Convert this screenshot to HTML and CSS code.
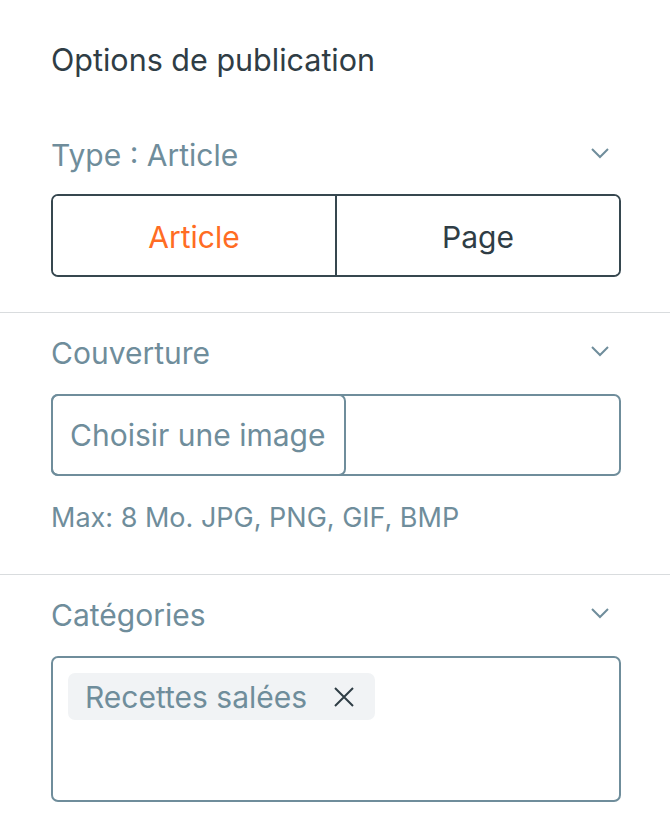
FILE: index.html
```html
<!DOCTYPE html>
<html lang="fr">
<head>
<meta charset="utf-8">
<link rel="stylesheet" href="styles.css">
</head>
<body>
<div class="panel">
  <h1 class="title">Options de publication</h1>

  <section class="section first">
    <div class="sec-head">
      <span class="sec-label">Type : Article</span>
      <svg class="chev" width="20" height="12" viewBox="0 0 20 12"><path d="M2 2 L10 10 L18 2" fill="none" stroke="#6f8d9b" stroke-width="2"/></svg>
    </div>
    <div class="seg">
      <button class="seg-btn active">Article</button>
      <button class="seg-btn">Page</button>
    </div>
  </section>

  <section class="section">
    <div class="sec-head">
      <span class="sec-label">Couverture</span>
      <svg class="chev" width="20" height="12" viewBox="0 0 20 12"><path d="M2 2 L10 10 L18 2" fill="none" stroke="#6f8d9b" stroke-width="2"/></svg>
    </div>
    <div class="file">
      <span class="file-btn">Choisir une image</span>
    </div>
    <p class="hint">Max: 8 Mo. JPG, PNG, GIF, BMP</p>
  </section>

  <section class="section last">
    <div class="sec-head">
      <span class="sec-label">Catégories</span>
      <svg class="chev" width="20" height="12" viewBox="0 0 20 12"><path d="M2 2 L10 10 L18 2" fill="none" stroke="#6f8d9b" stroke-width="2"/></svg>
    </div>
    <div class="tags">
      <span class="chip">Recettes salées
        <svg class="x" width="22" height="22" viewBox="0 0 22 22"><path d="M2 2 L20 20 M20 2 L2 20" stroke="#2f3d45" stroke-width="2"/></svg>
      </span>
    </div>
  </section>
</div>
</body>
</html>
```

FILE: styles.css
```css
* { box-sizing: border-box; }
body {
  margin: 0;
  background: #fff;
  font-family: Inter, "Noto Sans", sans-serif;
}
.panel { width: 670px; }
.title {
  margin: 0;
  padding: 39px 50px 0 51px;
  font-size: 30.5px;
  line-height: 42px;
  font-weight: 400;
  color: #2f3d45;
}
.section {
  padding: 19px 49px 35px 51px;
  border-bottom: 1px solid #d9dcde;
}
.section.first { padding-top: 53px; }
.section.first .sec-head { margin-bottom: 18px; }
.section.last { border-bottom: none; padding-bottom: 0; }
.sec-head {
  display: flex;
  justify-content: space-between;
  align-items: center;
  height: 42px;
  margin-bottom: 20px;
}
.sec-label {
  font-size: 30px;
  color: #6f8d9b;
}
.chev { margin-right: 11px; margin-top: -4px; }
.seg {
  display: flex;
  height: 83px;
  border: 2px solid #36474f;
  border-radius: 7px;
  overflow: hidden;
}
.seg-btn {
  flex: 1;
  border: none;
  background: #fff;
  font-family: inherit;
  font-size: 30px;
  color: #2f3d45;
  padding: 2px 0 0;
}
.seg-btn + .seg-btn { border-left: 2px solid #36474f; }
.seg-btn.active { color: #ff6c23; }
.file {
  display: flex;
  height: 82px;
  border: 2px solid #6f8d9b;
  border-radius: 7px;
}
.file-btn {
  display: flex;
  align-items: center;
  margin: -2px 0 -2px -2px;
  padding: 0 19px 0 17px;
  border: 2px solid #6f8d9b;
  border-radius: 7px;
  font-size: 30px;
  color: #6f8d9b;
}
.hint {
  margin: 27px 0 0;
  font-size: 27px;
  line-height: 30px;
  color: #6f8d9b;
  padding-bottom: 6px;
}
.tags {
  height: 146px;
  border: 2px solid #6f8d9b;
  border-radius: 7px;
  padding: 15px;
  display: flex;
  align-items: flex-start;
}
.chip {
  display: inline-flex;
  align-items: center;
  gap: 26px;
  height: 47px;
  padding: 0 20px 0 17px;
  background: #f1f3f5;
  border-radius: 7px;
  font-size: 30px;
  color: #6f8d9b;
}
```
